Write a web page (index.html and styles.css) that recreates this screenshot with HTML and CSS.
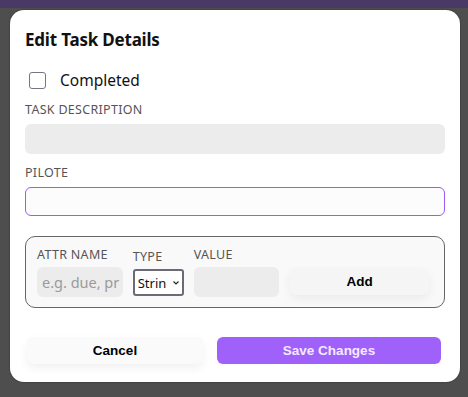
FILE: index.html
```html
<!DOCTYPE html>
<html lang="en">
<head>
    <meta charset="UTF-8">
    <meta name="viewport" content="width=device-width, initial-scale=1.0">
    <title>Edit Task</title>
    <link rel="stylesheet" href="styles.css">
</head>
<body>
    <div class="backdrop">
        <div class="modal">
            <h2 class="modal-title">Edit Task Details</h2>

            <label class="check-row">
                <span class="check-box"></span>
                <span class="check-text">Completed</span>
            </label>

            <div class="field">
                <div class="field-label">TASK DESCRIPTION</div>
                <div class="input input-grey"></div>
            </div>

            <div class="field">
                <div class="field-label">PILOTE</div>
                <div class="input input-focus"></div>
            </div>

            <div class="attr-box">
                <div class="attr-col attr-name">
                    <div class="field-label">ATTR NAME</div>
                    <div class="input input-grey small"><span class="placeholder">e.g. due, pr</span></div>
                </div>
                <div class="attr-col attr-type">
                    <div class="field-label">TYPE</div>
                    <div class="select">
                        <span>Strin</span>
                        <svg width="8" height="6" viewBox="0 0 8 6"><path d="M1.5 1.5 L4 4 L6.5 1.5" fill="none" stroke="#222" stroke-width="1.2"/></svg>
                    </div>
                </div>
                <div class="attr-col attr-value">
                    <div class="field-label">VALUE</div>
                    <div class="input input-grey small"></div>
                </div>
                <button class="btn btn-add">Add</button>
            </div>

            <div class="actions">
                <button class="btn btn-cancel">Cancel</button>
                <button class="btn btn-save">Save Changes</button>
            </div>
        </div>
    </div>
</body>
</html>
```

FILE: styles.css
```css
* {
    margin: 0;
    padding: 0;
    box-sizing: border-box;
}

body {
    font-family: 'Noto Sans', sans-serif;
    background: linear-gradient(to bottom, #4a3866 0, #4a3866 8px, #4e4e4e 8px);
    height: 397px;
    overflow: hidden;
}

.backdrop {
    padding: 10px 8px 0 10px;
}

.modal {
    width: 450px;
    height: 372px;
    background-color: #fff;
    border-radius: 14px;
    padding: 18px 15px 0 15px;
    box-shadow: 0 0 2px rgba(0, 0, 0, 0.4);
}

.modal-title {
    font-size: 17px;
    font-weight: 700;
    color: #111;
    letter-spacing: -0.2px;
    line-height: 24px;
}

.check-row {
    display: flex;
    align-items: center;
    margin-top: 17px;
    padding-left: 4px;
}

.check-box {
    width: 17px;
    height: 17px;
    border: 1px solid #7a7480;
    border-radius: 3px;
    background: #fff;
}

.check-text {
    margin-left: 14px;
    font-size: 15.5px;
    color: #111;
}

.field {
    margin-top: 11px;
}

.field + .field {
    margin-top: 11px;
}

.field-label {
    font-size: 12.5px;
    color: #555;
    letter-spacing: 0.3px;
    line-height: 16px;
    margin-bottom: 6px;
}

.input {
    height: 30px;
    border-radius: 6px;
}

.input-grey {
    background-color: #ececec;
}

.input-focus {
    background-color: #fcfcfc;
    border: 1px solid #9b5cf6;
    height: 29px;
}

.attr-box {
    display: flex;
    align-items: flex-end;
    margin-top: 20px;
    padding: 10px 15px 10px 11px;
    border: 1px solid #666;
    border-radius: 10px;
    background-color: #f9f9f9;
}

.attr-box .field-label {
    margin-bottom: 4px;
}

.attr-col {
    margin-right: 10px;
}

.attr-name,
.attr-value {
    width: 86px;
}

.small .placeholder {
    display: block;
    padding: 5px 0 0 5px;
    font-size: 14.5px;
    color: #9a9a9a;
    white-space: nowrap;
    overflow: hidden;
}

.select {
    width: 51px;
    height: 27px;
    border: 2px solid #6b6a76;
    border-radius: 3px;
    background: #fff;
    display: flex;
    align-items: center;
    padding-left: 3px;
    font-size: 13px;
    color: #111;
    margin-bottom: 1px;
}

.select span {
    width: 34px;
    overflow: hidden;
    white-space: nowrap;
}

.btn {
    font-family: 'Liberation Sans', Arial, sans-serif;
    font-weight: 700;
    font-size: 13.5px;
    border: none;
    border-radius: 6px;
    height: 27px;
}

.btn-add {
    margin-left: 1px;
    width: 139px;
    margin-bottom: 2px;
    background-color: #f5f5f5;
    color: #000;
    box-shadow: 0 4px 10px rgba(0, 0, 0, 0.06);
}

.actions {
    display: flex;
    margin-top: 29px;
    padding: 0 4px 0 2px;
    gap: 14px;
}

.btn-cancel {
    width: 176px;
    background-color: #fafafa;
    color: #000;
    box-shadow: 0 4px 10px rgba(0, 0, 0, 0.06);
}

.btn-save {
    flex: 1;
    background-color: #a061fa;
    color: #f3ebff;
}
```
